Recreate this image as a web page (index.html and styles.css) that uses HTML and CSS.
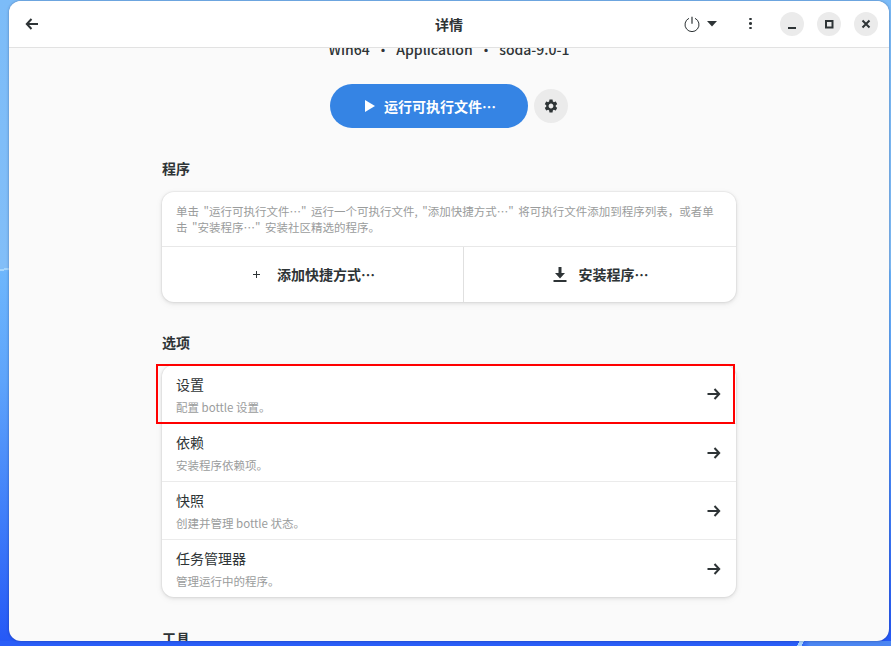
FILE: index.html
```html
<!DOCTYPE html>
<html lang="zh-CN">
<head>
<meta charset="utf-8">
<title>详情</title>
<link rel="stylesheet" href="styles.css">
</head>
<body>
<div class="desktop">
  <div class="window">
    <header class="headerbar">
      <div class="header-start">
        <svg class="icon" viewBox="0 0 16 16"><path d="M14 8H3M7.500 3 2.800 8l4.700 5" fill="none" stroke="#2e3436" stroke-width="2"/></svg>
      </div>
      <div class="header-title">详情</div>
      <div class="header-end">
        <div class="power">
          <svg class="icon" viewBox="0 0 16 16"><path d="M5 2.300a7 7 0 1 0 6 0" fill="none" stroke="#2e3436" stroke-width="1"/><path d="M8 .8v7" fill="none" stroke="#2e3436" stroke-width="1.200"/></svg>
          <svg class="caret" viewBox="0 0 10 6"><path d="M0 0h10L5 5.500z" fill="#2e3436"/></svg>
        </div>
        <div class="kebab"><span></span><span></span><span></span></div>
        <div class="win-buttons">
          <div class="win-btn"><svg class="win-icon" viewBox="0 0 12 12"><path d="M2 10h8" stroke="#2e3436" stroke-width="2" fill="none"/></svg></div>
          <div class="win-btn"><svg class="win-icon" viewBox="0 0 12 12"><path d="M3 3h6.500v6.500H3z" stroke="#2e3436" stroke-width="2" fill="none"/></svg></div>
          <div class="win-btn"><svg class="win-icon" viewBox="0 0 12 12"><path d="M2.500 2.500l7 7M9.500 2.500l-7 7" stroke="#2e3436" stroke-width="2" fill="none"/></svg></div>
        </div>
      </div>
    </header>
    <main class="content">
      <div class="meta"><span>Win64</span><span class="dot">·</span><span>Application</span><span class="dot">·</span><span>soda-9.0-1</span></div>
      <div class="actions">
        <button class="run-btn">
          <svg class="play" viewBox="0 0 10 12"><path d="M0 0l10 6-10 6z" fill="#fff"/></svg>
          <span>运行可执行文件…</span>
        </button>
        <button class="gear-btn">
          <svg class="icon" viewBox="0 0 24 24"><path fill="#2e3436" d="M19.140 12.940c.04-.3.06-.61.06-.94 0-.32-.02-.64-.07-.94l2.030-1.580c.18-.14.23-.41.12-.61l-1.920-3.320c-.12-.22-.37-.29-.59-.22l-2.390.96c-.5-.38-1.030-.7-1.620-.94l-.36-2.540c-.04-.24-.24-.41-.48-.41h-3.840c-.24 0-.43.17-.47.41l-.36 2.540c-.59.24-1.130.57-1.620.94l-2.390-.96c-.22-.08-.47 0-.59.22L2.740 8.870c-.12.21-.08.47.12.61l2.030 1.580c-.05.3-.09.63-.09.94s.02.64.07.94l-2.030 1.580c-.18.14-.23.41-.12.61l1.920 3.320c.12.22.37.29.59.22l2.390-.96c.5.38 1.030.7 1.620.94l.36 2.540c.05.24.24.41.48.41h3.840c.24 0 .44-.17.47-.41l.36-2.540c.59-.24 1.130-.56 1.620-.94l2.390.96c.22.08.47 0 .59-.22l1.920-3.320c.12-.22.07-.47-.12-.61l-2.010-1.580zM12 15.600c-1.980 0-3.600-1.620-3.600-3.600s1.620-3.600 3.600-3.600 3.600 1.620 3.600 3.600-1.620 3.600-3.600 3.600z"/></svg>
        </button>
      </div>
      <section class="group programs">
        <h2 class="group-title">程序</h2>
        <div class="card">
          <p class="card-desc">单击 "运行可执行文件…" 运行一个可执行文件, "添加快捷方式…" 将可执行文件添加到程序列表，或者单击 "安装程序…" 安装社区精选的程序。</p>
          <div class="card-actions">
            <div class="card-action add">
              <svg class="plus" viewBox="0 0 7 7"><path d="M3.500 0v7M0 3.500h7" stroke="#2e3436" stroke-width="1" fill="none"/></svg>
              <span>添加快捷方式…</span>
            </div>
            <div class="card-action install">
              <svg class="icon" viewBox="0 0 16 16"><path d="M6 1h3v6h3.500L7.500 12.500 2.500 7H6z" fill="#2e3436" transform="translate(.5 0)"/><path d="M1.500 15h13" stroke="#2e3436" stroke-width="2" fill="none"/></svg>
              <span>安装程序…</span>
            </div>
          </div>
        </div>
      </section>
      <section class="group options">
        <h2 class="group-title">选项</h2>
        <div class="card list">
          <div class="row">
            <div class="row-text"><div class="row-title">设置</div><div class="row-sub">配置 bottle 设置。</div></div>
            <svg class="icon" viewBox="0 0 16 16"><path d="M1.500 8H13M8.500 3l4.700 5-4.700 5" fill="none" stroke="#2e3436" stroke-width="2"/></svg>
          </div>
          <div class="row">
            <div class="row-text"><div class="row-title">依赖</div><div class="row-sub">安装程序依赖项。</div></div>
            <svg class="icon" viewBox="0 0 16 16"><path d="M1.500 8H13M8.500 3l4.700 5-4.700 5" fill="none" stroke="#2e3436" stroke-width="2"/></svg>
          </div>
          <div class="row">
            <div class="row-text"><div class="row-title">快照</div><div class="row-sub">创建并管理 bottle 状态。</div></div>
            <svg class="icon" viewBox="0 0 16 16"><path d="M1.500 8H13M8.500 3l4.700 5-4.700 5" fill="none" stroke="#2e3436" stroke-width="2"/></svg>
          </div>
          <div class="row">
            <div class="row-text"><div class="row-title">任务管理器</div><div class="row-sub">管理运行中的程序。</div></div>
            <svg class="icon" viewBox="0 0 16 16"><path d="M1.500 8H13M8.500 3l4.700 5-4.700 5" fill="none" stroke="#2e3436" stroke-width="2"/></svg>
          </div>
        </div>
      </section>
      <section class="group tools">
        <h2 class="group-title">工具</h2>
      </section>
    </main>
  </div>
  <div class="highlight"></div>
</div>
</body>
</html>
```
FILE: styles.css
```css
* { box-sizing: border-box; }
html, body { margin: 0; padding: 0; }
body {
  font-family: "Noto Sans CJK SC", "Noto Sans", sans-serif;
  color: #2e3436;
  overflow: hidden;
}
.desktop {
  position: relative;
  width: 891px;
  height: 646px;
  padding: 1px 2px 5px 9px;
  overflow: hidden;
  background:
    linear-gradient(172deg, transparent 0 3px, #a6d6fd 3px 5px, transparent 5px) 0 266px / 9px 12px no-repeat,
    linear-gradient(118deg, transparent 0 4px, #a9d4fb 4px 8px, transparent 8px) 795px 641px / 18px 5px no-repeat,
    linear-gradient(90deg, #2a5ef8 0 800px, #4c86f2 810px) 0 641px / 891px 5px no-repeat,
    linear-gradient(180deg, #7cbcf8 0, #82bef8 268px, #6db6fc 272px, #5ea4fb 380px, #3f7df9 520px, #2659f6 640px);
}
.window {
  width: 880px;
  height: 640px;
  background: #fafafa;
  border-radius: 12px;
  overflow: hidden;
  display: flex;
  flex-direction: column;
  box-shadow: 0 0 3px rgba(0, 0, 50, .35);
}
.headerbar {
  position: relative;
  z-index: 2;
  flex: none;
  height: 47px;
  background: #fff;
  border-bottom: 1px solid #e2e2e2;
  display: grid;
  grid-template-columns: 1fr auto 1fr;
  align-items: center;
  padding: 0 11px 1px;
}
.header-title { font-size: 14px; font-weight: 700; line-height: 20px; }
.header-start { display: flex; padding-left: 4px; }
.header-end { display: flex; align-items: center; justify-content: flex-end; }
.icon { width: 16px; height: 16px; display: block; flex: none; }
.power { display: flex; align-items: center; gap: 7px; }
.caret { width: 10px; height: 6px; display: block; }
.kebab { display: flex; flex-direction: column; gap: 2px; margin: 0 28px 0 32px; }
.kebab span { width: 3px; height: 2.500px; background: #2e3436; border-radius: 50%; }
.win-buttons { display: flex; gap: 13px; }
.win-btn { width: 24px; height: 24px; border-radius: 50%; background: #ebebeb; display: flex; align-items: center; justify-content: center; }
.win-icon { width: 12px; height: 12px; display: block; }
.content { flex: 1; min-height: 0; overflow: hidden; }
.meta {
  margin-top: -9px;
  height: 20px;
  line-height: 20px;
  font-size: 14px;
  font-weight: 500;
  display: flex;
  justify-content: center;
  gap: 6.250px;
}
.actions { display: flex; justify-content: center; align-items: center; gap: 6px; margin-top: 25px; }
.run-btn {
  width: 198px;
  height: 44px;
  border: 0;
  padding: 0 0 1px 3px;
  border-radius: 22px;
  background: #3584e4;
  color: #fff;
  font: 700 14px "Noto Sans CJK SC", "Noto Sans", sans-serif;
  display: flex;
  align-items: center;
  justify-content: center;
  gap: 9px;
}
.play { width: 10px; height: 12px; display: block; }
.gear-btn { width: 34px; height: 34px; border: 0; padding: 0; border-radius: 50%; background: #ebebeb; display: flex; align-items: center; justify-content: center; }
.group { width: 574px; margin-left: 153px; }
.programs { margin-top: 30px; }
.options { margin-top: 30px; }
.tools { margin-top: 31px; }
.group-title { margin: 0 0 14px; font-size: 14px; font-weight: 700; line-height: 20px; }
.options .group-title { margin-bottom: 13px; }
.card { background: #fff; border-radius: 12px; box-shadow: 0 0 0 1px rgba(0, 0, 0, .03), 0 1px 3px 1px rgba(0, 0, 0, .07), 0 2px 6px 2px rgba(0, 0, 0, .03); overflow: hidden; }
.card-desc { margin: 0; padding: 11px 14px; height: 54px; font-size: 11.500px; word-spacing: 2px; line-height: 16px; color: #9a9c9c; }
.card-actions { display: flex; height: 56px; border-top: 1px solid #e8e8e8; font-size: 14px; font-weight: 700; }
.card-action { display: flex; align-items: center; justify-content: center; gap: 17px; padding-bottom: 1px; }
.add { width: 302px; padding-left: 3px; border-right: 1px solid #e0e0e0; }
.install { flex: 1; gap: 11px; }
.plus { width: 7px; height: 7px; display: block; }
.row { height: 58px; display: flex; align-items: center; justify-content: space-between; padding: 0 14px; border-top: 1px solid #ebebeb; }
.row:first-child { border-top: 0; }
.row-title { font-size: 14px; line-height: 20px; }
.row-sub { font-size: 11.500px; line-height: 16px; color: #9a9c9c; margin-top: 5px; }
.highlight { position: absolute; left: 156px; top: 364px; width: 579px; height: 60px; border: 2px solid #f00; pointer-events: none; }
```
